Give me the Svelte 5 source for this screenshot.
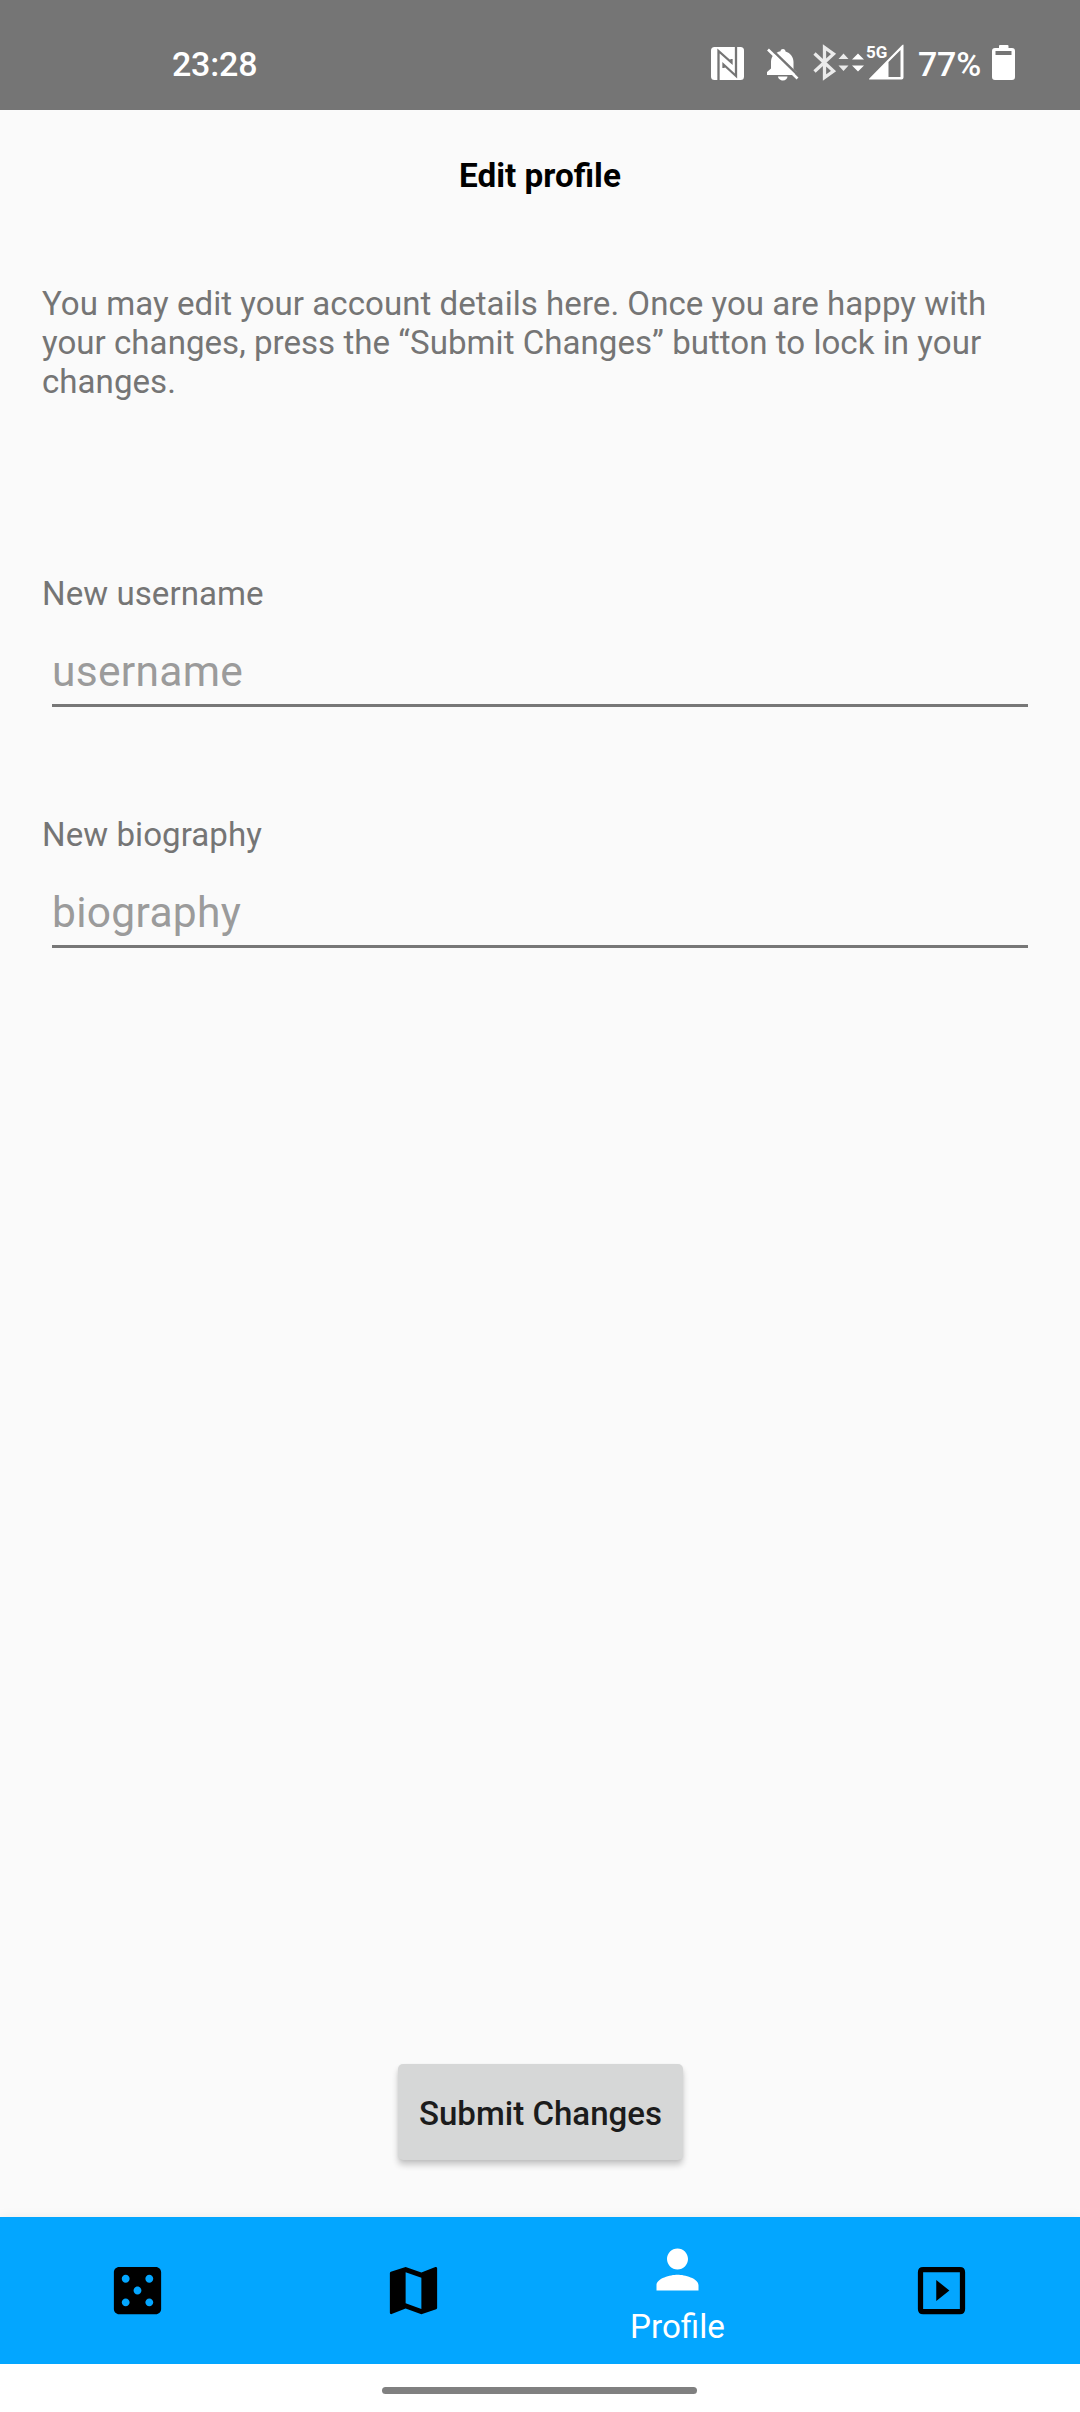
<script>
  const fields = $state([
    { id: 'username', label: 'New username', hint: 'username', value: '' },
    { id: 'biography', label: 'New biography', hint: 'biography', value: '' },
  ]);
</script>

<div class="screen">
  <header class="status">
    <span class="clock">23:28</span>
    <div class="indicators">
      <svg class="nfc" width="33" height="33" viewBox="0 0 33 33">
        <rect width="33" height="33" rx="3.500" fill="#fff" />
        <path fill="none" stroke="#757575" stroke-width="2.300" d="M7.500 33V4L20.500 15.500V12M25 0V29L12.500 17.500V21" />
      </svg>
      <svg class="bell" width="32" height="33" viewBox="0 0 32 33">
        <path fill="#fff" d="M16 1C17.500 1 18.500 2 18.500 3.500C23.500 5 26.500 9 26.500 14V21L29.500 24L27 27H0V24L4 20.500V14C4 8 8 4.500 13.500 3.200C13.700 1.800 14.600 1 16 1ZM11 28.500H20.500C20.500 30.500 18.500 32.500 16 32.500S11 30.500 11 28.500Z" />
        <path stroke="#757575" stroke-width="2.500" d="M2 -1L32.500 28.500" />
        <path stroke="#fff" stroke-width="2.600" d="M1 1.500L30.500 30.500" />
      </svg>
      <svg class="bt" width="40" height="37" viewBox="0 0 40 37">
        <path fill="none" stroke="#ebebeb" stroke-width="3.300" d="M1.500 9.500L20.500 27L11.500 33.500V3.500L20.500 10L1.500 27.500" />
        <path fill="#ebebeb" d="M25.500 15L30.500 9.500L35.500 15ZM25.500 21.500H35.500L30.500 27Z" />
      </svg>
      <svg class="signal" width="52" height="37" viewBox="0 0 52 37">
        <path fill="#fff" d="M0 15.500L6 9.500L12 15.500ZM0 21.500H12L6 27.500Z" />
        <path fill="#fff" fill-rule="evenodd" d="M51.500 1V33.500Q51.500 35.500 49.500 35.500H17.500Q16.500 35.500 17.300 34.500L50 1.200Q51.500 0 51.500 1ZM36.500 18V33H48.500V6Z" />
        <text x="14" y="14" fill="#fff">5G</text>
      </svg>
      <span class="percent">77%</span>
      <svg class="battery" width="23" height="35" viewBox="0 0 23 35">
        <path fill="#fff" fill-rule="evenodd" d="M8 0H15.500Q16.500 0 16.500 1V3H20Q23 3 23 6V32Q23 35 20 35H3Q0 35 0 32V6Q0 3 3 3H7V1Q7 0 8 0ZM3.500 6V10H19.500V6Z" />
      </svg>
    </div>
  </header>

  <main>
    <h1>Edit profile</h1>
    <p class="intro">You may edit your account details here. Once you are happy with your changes, press the “Submit Changes” button to lock in your changes.</p>
    <form>
      {#each fields as field (field.id)}
        <div class="field">
          <label for={field.id}>{field.label}</label>
          <input id={field.id} placeholder={field.hint} bind:value={field.value} />
        </div>
      {/each}
      <button type="button">Submit Changes</button>
    </form>
  </main>

  <nav>
    <a href="#games" aria-label="Games">
      <svg width="63" height="63" viewBox="0 0 24 24"><path d="M19 3H5c-1.100 0-2 .9-2 2v14c0 1.100.9 2 2 2h14c1.100 0 2-.9 2-2V5c0-1.100-.9-2-2-2zM7.500 18c-.83 0-1.500-.67-1.500-1.500S6.670 15 7.500 15s1.500.67 1.500 1.500S8.330 18 7.500 18zm0-9C6.670 9 6 8.330 6 7.500S6.670 6 7.500 6 9 6.670 9 7.500 8.330 9 7.500 9zm4.500 4.500c-.83 0-1.500-.67-1.500-1.500s.67-1.500 1.500-1.500 1.500.67 1.500 1.500-.67 1.500-1.500 1.500zm4.500 4.500c-.83 0-1.500-.67-1.500-1.500s.67-1.500 1.500-1.500 1.500.67 1.500 1.500-.67 1.500-1.500 1.500zm0-9c-.83 0-1.500-.67-1.500-1.500S15.670 6 16.500 6s1.500.67 1.500 1.500S17.330 9 16.500 9z" /></svg>
    </a>
    <a href="#map" aria-label="Map">
      <svg width="63" height="63" viewBox="0 0 24 24"><path d="M20.500 3l-.16.03L15 5.100 9 3 3.360 4.900c-.21.07-.36.25-.36.48V20.500c0 .28.22.5.5.5l.16-.03L9 18.900l6 2.100 5.640-1.900c.21-.07.36-.25.36-.48V3.500c0-.28-.22-.5-.5-.5zM15 19l-6-2.110V5l6 2.110V19z" /></svg>
    </a>
    <a class="active" href="#profile">
      <svg width="63" height="63" viewBox="0 0 24 24"><path d="M12 12c2.210 0 4-1.790 4-4s-1.790-4-4-4-4 1.790-4 4 1.790 4 4 4zm0 2c-2.670 0-8 1.340-8 4v2h16v-2c0-2.660-5.330-4-8-4z" /></svg>
      <span>Profile</span>
    </a>
    <a href="#videos" aria-label="Videos">
      <svg width="63" height="63" viewBox="0 0 24 24"><path fill-rule="evenodd" d="M5 3H19Q21 3 21 5V19Q21 21 19 21H5Q3 21 3 19V5Q3 3 5 3ZM5 5V19H19V5ZM10 8L15 12L10 16Z" /></svg>
    </a>
  </nav>
  <footer><div class="handle"></div></footer>
</div>

<style>
  :global(body) { margin: 0; }
  .screen {
    width: 1080px;
    height: 2412px;
    display: flex;
    flex-direction: column;
    background: #fafafa;
    font-family: Roboto, sans-serif;
    font-size: 33.07px;
    line-height: 39px;
    color: #757575;
    overflow: hidden;
  }
  .status {
    flex: none;
    box-sizing: border-box;
    height: 110px;
    padding: 44px 65px 0 172px;
    display: flex;
    justify-content: space-between;
    align-items: flex-start;
    background: #757575;
    color: #fff;
    font-weight: 500;
    font-size: 34px;
    line-height: 40px;
    letter-spacing: -0.2px;
  }
  .indicators { display: flex; align-items: flex-start; }
  svg { display: block; flex: none; }
  .nfc { margin-top: 3px; }
  .bell { margin: 4px 0 0 23px; }
  .bt { margin-left: 14px; }
  .signal { margin-left: -1px; overflow: visible; }
  .signal text { font: 700 17px Roboto, sans-serif; letter-spacing: 0; }
  .percent { margin-left: 14px; width: 64px; white-space: nowrap; }
  .battery { margin: 1px 0 0 10px; }
  main { flex: 1; display: flex; flex-direction: column; padding: 46px 42px 0; }
  h1 {
    margin: 0;
    text-align: center;
    font-size: 33.3px;
    font-weight: 700;
    line-height: 39px;
    color: #000;
  }
  .intro { margin: 89px 0 0; letter-spacing: 0.03px; }
  form { flex: 1; display: flex; flex-direction: column; margin-top: 173px; }
  .field { display: flex; flex-direction: column; height: 241px; }
  label { display: block; height: 39px; letter-spacing: 0.06px; }
  input {
    margin: 20px 10px 0;
    box-sizing: border-box;
    height: 74px;
    padding: 13px 0 8px;
    border: 0;
    border-bottom: 3px solid #777;
    border-radius: 0;
    outline: none;
    background: transparent;
    font: 42.520px/50px Roboto, sans-serif;
    letter-spacing: 0.3px;
    color: #212121;
  }
  input::placeholder { color: #9b9b9b; opacity: 1; }
  button {
    align-self: center;
    margin: auto 0 57px 1px;
    width: 285px;
    height: 96px;
    padding: 2px 0 0;
    border: 0;
    border-radius: 5px;
    background: #d6d7d7;
    color: #1c1c1c;
    font: 500 33.070px/39px Roboto, sans-serif;
    white-space: nowrap;
    box-shadow: 0 5px 6px rgba(0, 0, 0, 0.2), 0 1px 3px rgba(0, 0, 0, 0.06);
  }
  nav {
    flex: none;
    display: grid;
    grid-template-columns: 275px 277px 251px 277px;
    height: 147px;
    background: #03a6ff;
    box-shadow: 0 0 12px rgba(0, 0, 0, 0.06);
  }
  nav a {
    display: flex;
    flex-direction: column;
    align-items: center;
    justify-content: center;
    color: #000;
    text-decoration: none;
  }
  nav svg { fill: currentColor; }
  nav a.active { color: #fff; justify-content: flex-start; padding-top: 21px; }
  nav span { margin-top: 6px; font-size: 33.2px; }
  footer { flex: none; display: flex; justify-content: center; height: 48px; background: #fff; }
  .handle { margin: 23px 1px 0 0; width: 315px; height: 7px; border-radius: 4px; background: #808080; }
</style>
